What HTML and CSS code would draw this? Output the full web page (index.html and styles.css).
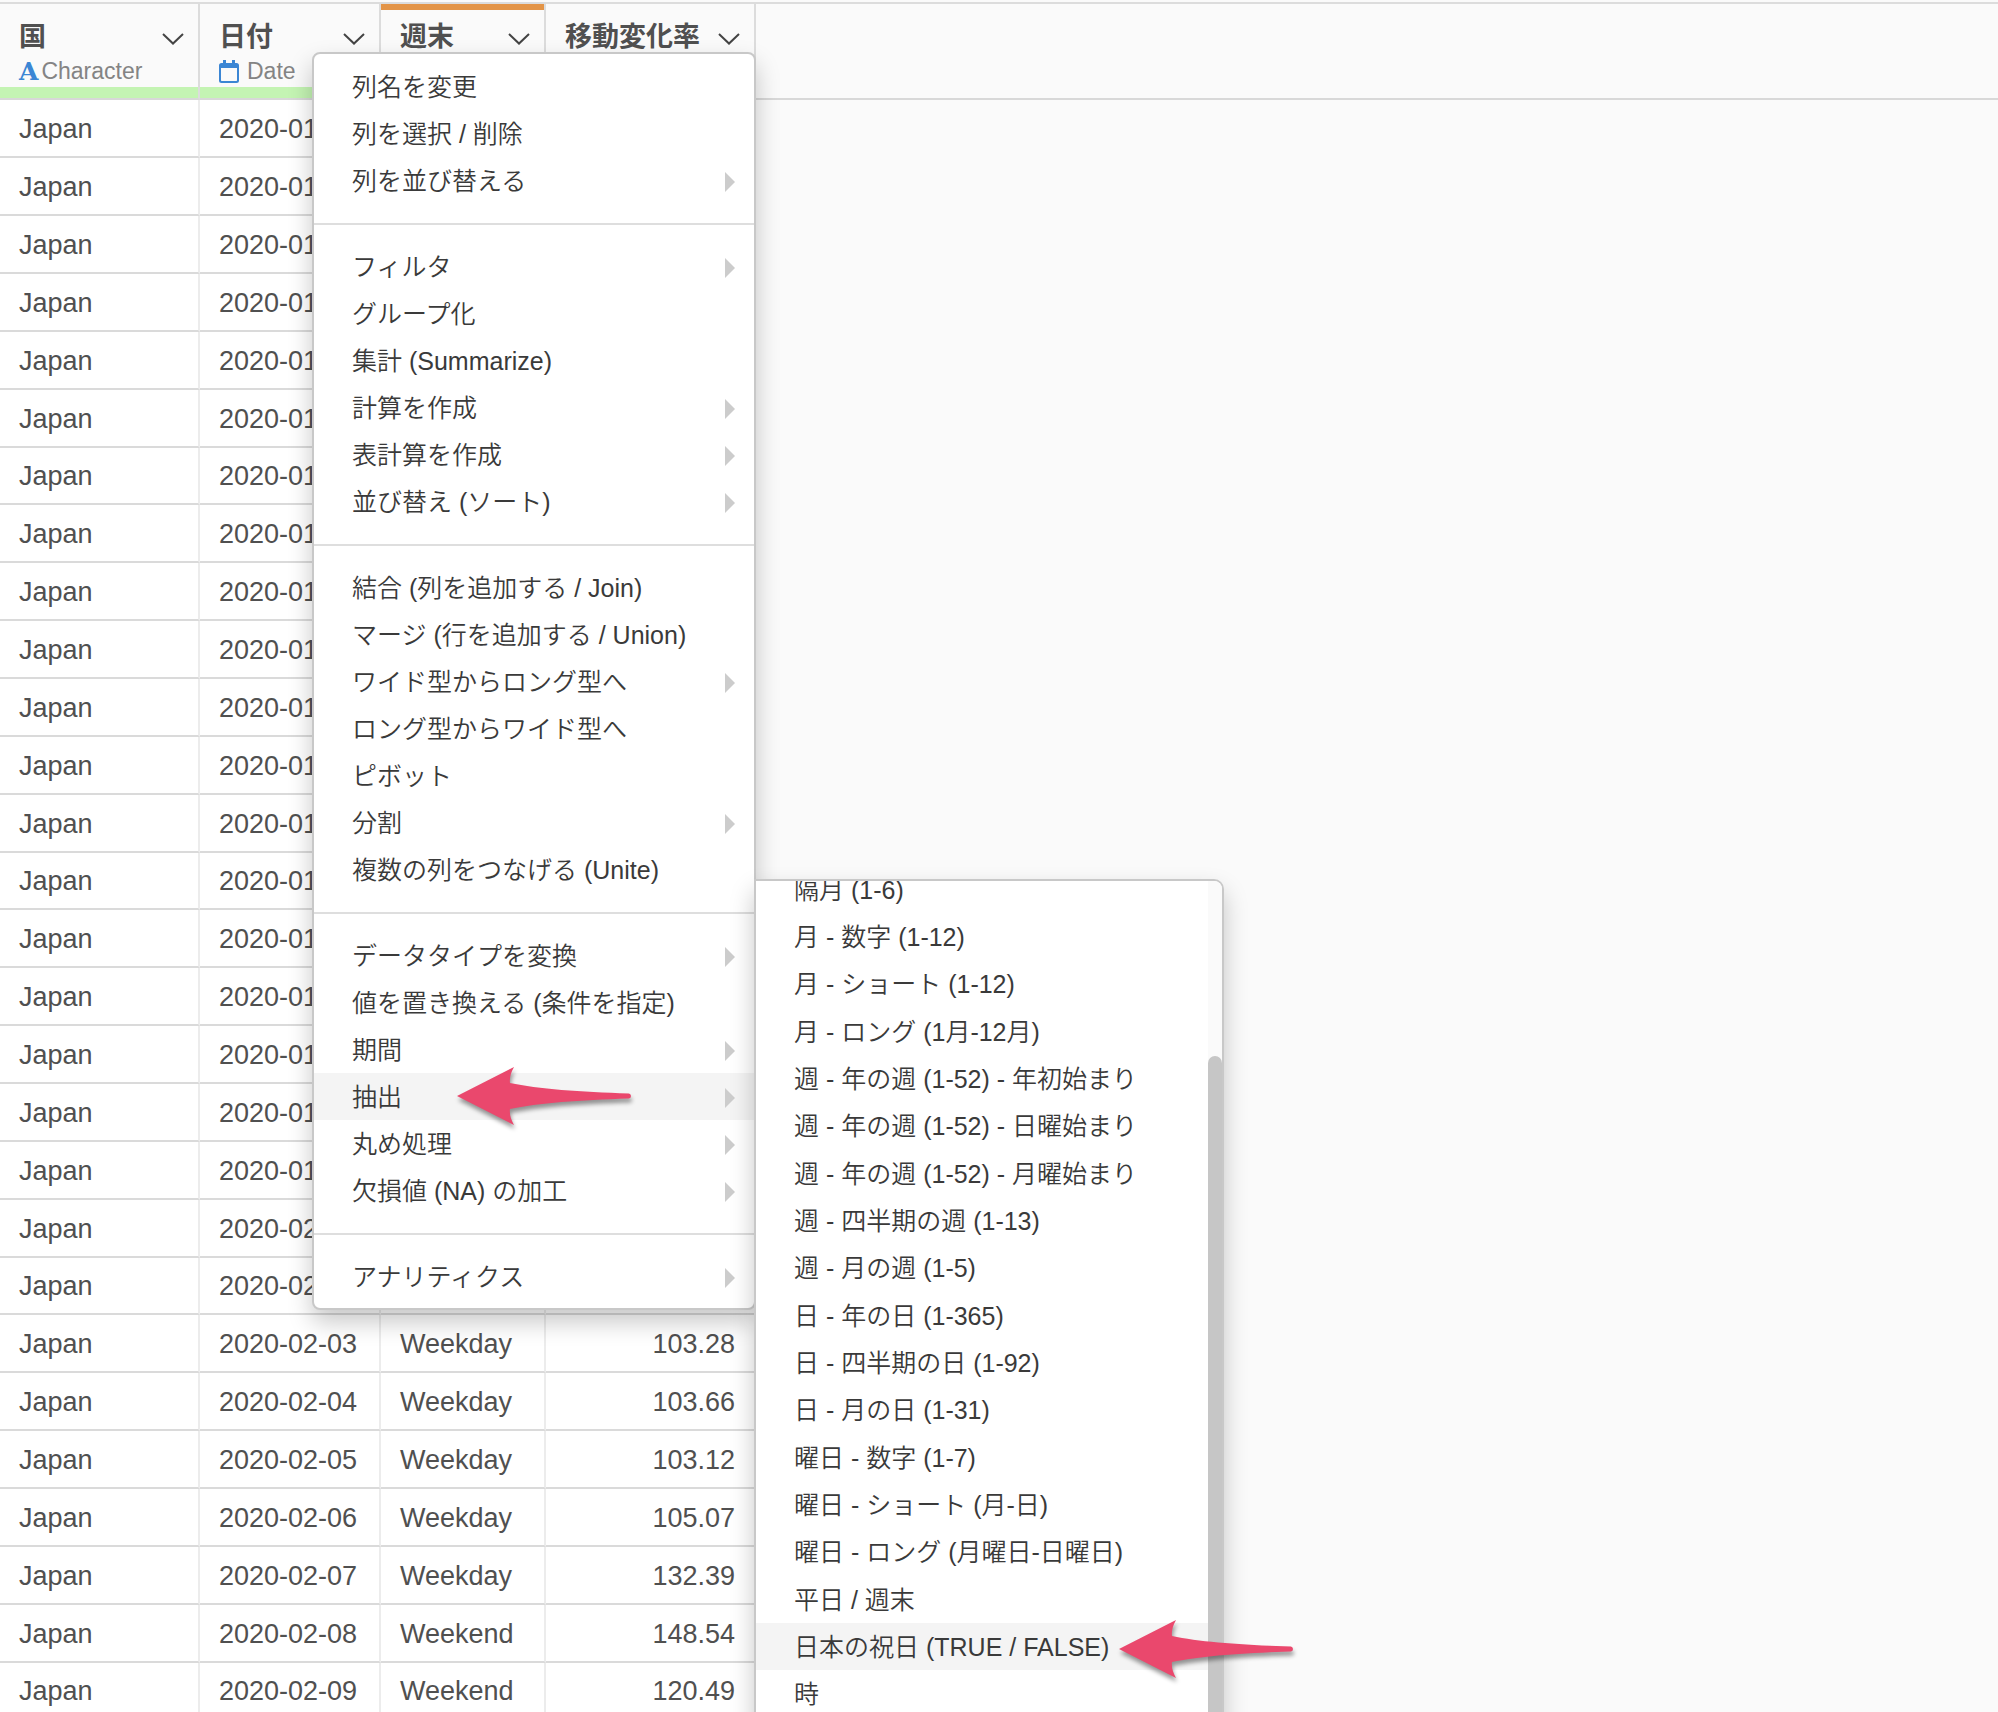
FILE: index.html
```html
<!DOCTYPE html>
<html lang="ja">

<head>
    <meta charset="UTF-8">
    <meta name="viewport" content="width=device-width, initial-scale=1.0">
    <title>データテーブル</title>
    <link rel="stylesheet" href="styles.css">
</head>

<body>
    <!-- Data table -->
    <table class="data-table">
        <colgroup>
            <col class="col-country">
            <col class="col-date">
            <col class="col-weekend">
            <col class="col-rate">
            <col>
        </colgroup>
        <thead>
            <tr>
                <th>
                    <div class="col-head">
                        <div class="col-name">国
                            <button class="col-toggle" aria-label="国のメニュー"><svg width="22" height="12" viewBox="0 0 22 12"><path d="M1 1l10 9.500 10-9.500"/></svg></button>
                        </div>
                        <div class="col-type"><span class="icon-char">A</span>Character</div>
                    </div>
                    <div class="col-bar"></div>
                </th>
                <th>
                    <div class="col-head">
                        <div class="col-name">日付
                            <button class="col-toggle" aria-label="日付のメニュー"><svg width="22" height="12" viewBox="0 0 22 12"><path d="M1 1l10 9.500 10-9.500"/></svg></button>
                        </div>
                        <div class="col-type">
                            <svg class="icon-date" width="20" height="23" viewBox="0 0 20 23"><path fill-rule="evenodd" d="M4 0h3v3h6V0h3v3h1.500a2.500 2.500 0 0 1 2.500 2.500v15a2.500 2.500 0 0 1-2.500 2.500h-15A2.500 2.500 0 0 1 0 20.500v-15A2.500 2.500 0 0 1 2.500 3H4zM2 8v12.500l.5.5h15l.5-.5V8z"/></svg>
                            Date
                        </div>
                    </div>
                    <div class="col-bar"></div>
                </th>
                <th>
                    <div class="col-head selected">
                        <div class="col-name">週末
                            <button class="col-toggle" aria-label="週末のメニュー"><svg width="22" height="12" viewBox="0 0 22 12"><path d="M1 1l10 9.500 10-9.500"/></svg></button>
                        </div>
                    </div>
                    <div class="col-bar"></div>
                </th>
                <th>
                    <div class="col-head">
                        <div class="col-name">移動変化率
                            <button class="col-toggle" aria-label="移動変化率のメニュー"><svg width="22" height="12" viewBox="0 0 22 12"><path d="M1 1l10 9.500 10-9.500"/></svg></button>
                        </div>
                    </div>
                    <div class="col-bar"></div>
                </th>
                <td class="filler"></td>
            </tr>
        </thead>
        <tbody id="rows"></tbody>
    </table>

    <!-- Column menu -->
    <nav class="menu column-menu">
        <ul>
            <li><button>列名を変更</button></li>
            <li><button>列を選択 / 削除</button></li>
            <li><button class="has-sub">列を並び替える</button></li>
        </ul>
        <ul>
            <li><button class="has-sub">フィルタ</button></li>
            <li><button>グループ化</button></li>
            <li><button>集計 (Summarize)</button></li>
            <li><button class="has-sub">計算を作成</button></li>
            <li><button class="has-sub">表計算を作成</button></li>
            <li><button class="has-sub">並び替え (ソート)</button></li>
        </ul>
        <ul>
            <li><button>結合 (列を追加する / Join)</button></li>
            <li><button>マージ (行を追加する / Union)</button></li>
            <li><button class="has-sub">ワイド型からロング型へ</button></li>
            <li><button>ロング型からワイド型へ</button></li>
            <li><button>ピボット</button></li>
            <li><button class="has-sub">分割</button></li>
            <li><button>複数の列をつなげる (Unite)</button></li>
        </ul>
        <ul>
            <li><button class="has-sub">データタイプを変換</button></li>
            <li><button>値を置き換える (条件を指定)</button></li>
            <li><button class="has-sub">期間</button></li>
            <li><button class="has-sub active">抽出</button></li>
            <li><button class="has-sub">丸め処理</button></li>
            <li><button class="has-sub">欠損値 (NA) の加工</button></li>
        </ul>
        <ul>
            <li><button class="has-sub">アナリティクス</button></li>
        </ul>
    </nav>

    <!-- Extract submenu -->
    <nav class="menu sub-menu">
        <ul>
            <li><button>隔月 (1-6)</button></li>
            <li><button>月 - 数字 (1-12)</button></li>
            <li><button>月 - ショート (1-12)</button></li>
            <li><button>月 - ロング (1月-12月)</button></li>
            <li><button>週 - 年の週 (1-52) - 年初始まり</button></li>
            <li><button>週 - 年の週 (1-52) - 日曜始まり</button></li>
            <li><button>週 - 年の週 (1-52) - 月曜始まり</button></li>
            <li><button>週 - 四半期の週 (1-13)</button></li>
            <li><button>週 - 月の週 (1-5)</button></li>
            <li><button>日 - 年の日 (1-365)</button></li>
            <li><button>日 - 四半期の日 (1-92)</button></li>
            <li><button>日 - 月の日 (1-31)</button></li>
            <li><button>曜日 - 数字 (1-7)</button></li>
            <li><button>曜日 - ショート (月-日)</button></li>
            <li><button>曜日 - ロング (月曜日-日曜日)</button></li>
            <li><button>平日 / 週末</button></li>
            <li><button class="active">日本の祝日 (TRUE / FALSE)</button></li>
            <li><button>時</button></li>
        </ul>
        <div class="scroll-track"><div class="scroll-thumb"></div></div>
    </nav>

    <!-- Pointer arrows -->
    <svg class="pointer pointer-extract" width="174" height="58" viewBox="0 0 174 58"><path d="M0 29L57 0q-5 9-4 16c28 6 70 9 119 10.500q2 .5 2 2.500t-2 2.500C123 33 81 36 53 42q-1 7 4 16z"/></svg>
    <svg class="pointer pointer-holiday" width="174" height="58" viewBox="0 0 174 58"><path d="M0 29L57 0q-5 9-4 16c28 6 70 9 119 10.500q2 .5 2 2.500t-2 2.500C123 33 81 36 53 42q-1 7 4 16z"/></svg>

    <script>
        const values = {
            '2020-02-03': ['Weekday', '103.28'],
            '2020-02-04': ['Weekday', '103.66'],
            '2020-02-05': ['Weekday', '103.12'],
            '2020-02-06': ['Weekday', '105.07'],
            '2020-02-07': ['Weekday', '132.39'],
            '2020-02-08': ['Weekend', '148.54'],
            '2020-02-09': ['Weekend', '120.49']
        };

        function displayRows() {
            let html = '';
            for (let i = 0; i < 28; i++) {
                const date = new Date(Date.UTC(2020, 0, 13 + i)).toISOString().slice(0, 10);
                const [weekend, rate] = values[date] || ['', ''];
                html += `
                    <tr>
                        <td>Japan</td>
                        <td>${date}</td>
                        <td>${weekend}</td>
                        <td class="number">${rate}</td>
                        <td class="filler"></td>
                    </tr>`;
            }
            document.getElementById('rows').innerHTML = html;
        }

        displayRows();
    </script>
</body>

</html>
```
FILE: styles.css
```css
* {
    margin: 0;
    padding: 0;
    box-sizing: border-box;
}

body {
    position: relative;
    height: 100vh;
    padding-top: 2px;
    overflow: hidden;
    background: #fafafa;
    color: #505050;
    font-family: "Liberation Sans", "Noto Sans CJK JP", sans-serif;
}

button {
    border: none;
    background: transparent;
    font: inherit;
    color: inherit;
    cursor: pointer;
}

/* Data table */
.data-table {
    width: 100%;
    table-layout: fixed;
    border-collapse: separate;
    border-spacing: 0;
    border-top: 2px solid #dcdcdc;
    font-size: 27px;
}

.col-country {
    width: 200px;
}

.col-date {
    width: 181px;
}

.col-weekend {
    width: 165px;
}

.col-rate {
    width: 210px;
}

.data-table th {
    border-right: 2px solid #dcdcdc;
    border-bottom: 2px solid #d8d8d8;
    text-align: left;
    vertical-align: top;
}

.col-head {
    height: 83px;
    padding: 15px 14px 0 19px;
}

.col-head.selected {
    border-top: 6px solid #e39447;
    padding-top: 9px;
}

.col-name {
    display: flex;
    align-items: center;
    justify-content: space-between;
    line-height: 36px;
    white-space: nowrap;
}

.col-toggle {
    display: flex;
    padding-top: 4px;
}

.col-toggle svg {
    fill: none;
    stroke: #444;
    stroke-width: 2;
}

.col-type {
    display: flex;
    align-items: center;
    line-height: 33px;
    font-size: 23px;
    font-weight: normal;
    color: #848484;
}

.icon-char {
    margin-right: 3px;
    font-family: "DejaVu Serif", serif;
    font-size: 25px;
    font-weight: bold;
    color: #3b86d4;
}

.icon-date {
    margin-right: 8px;
    fill: #3b86d4;
}

.col-bar {
    height: 11px;
    background: #c4f4b3;
}

.data-table tbody tr {
    height: 58px;
}

.data-table tbody tr:nth-child(7n) {
    height: 57px;
}

.data-table tbody td {
    padding: 2px 0 0 19px;
    border-right: 2px solid #ececec;
    border-bottom: 2px solid #dadada;
    background: #fff;
    vertical-align: middle;
    white-space: nowrap;
}

.data-table tbody .number {
    padding-right: 19px;
    text-align: right;
}

.data-table thead .filler {
    border-bottom: 2px solid #d8d8d8;
}

.data-table tbody .filler {
    border: none;
    background: #fafafa;
}

/* Menus */
.menu {
    position: absolute;
    border: 2px solid #c8c8c8;
    background: #fff;
    box-shadow: 0 12px 24px rgba(0, 0, 0, 0.22);
    font-size: 25px;
    font-weight: 350;
    color: #3a3a3a;
}

.menu ul {
    list-style: none;
}

.menu button {
    display: flex;
    align-items: center;
    justify-content: space-between;
    width: 100%;
    height: 47px;
    padding: 0 19px 4px 38px;
    text-align: left;
    white-space: nowrap;
}

.menu button:hover,
.menu .active {
    background: #f4f4f4;
}

.menu .has-sub::after {
    content: "";
    margin-top: 6px;
    border: solid transparent;
    border-width: 10px 0 10px 10px;
    border-left-color: #ccc;
}

.column-menu {
    top: 52px;
    left: 312px;
    width: 444px;
    padding: 9px 0 8px;
    border-radius: 8px;
}

.column-menu ul + ul {
    margin-top: 19px;
    padding-top: 18px;
    border-top: 2px solid #dedede;
}

.sub-menu {
    top: 879px;
    bottom: -20px;
    left: 754px;
    display: flex;
    width: 470px;
    overflow: hidden;
    border-radius: 0 10px 0 0;
}

/* scrolled part way through the first item */
.sub-menu ul {
    flex: 1;
    margin-top: -15px;
}

.sub-menu li:nth-child(3n) button {
    height: 48px;
}

.scroll-track {
    width: 14px;
    padding-top: 175px;
    background: #fafafa;
}

.scroll-thumb {
    height: 100%;
    border-radius: 7px;
    background: #c6c6c6;
}

/* Pointer arrows */
.pointer {
    position: absolute;
    overflow: visible;
    fill: #ea486d;
    filter: drop-shadow(1px 4px 2px rgba(0, 0, 0, 0.4));
}

.pointer-extract {
    top: 1067px;
    left: 457px;
}

.pointer-holiday {
    top: 1620px;
    left: 1119px;
}
```
